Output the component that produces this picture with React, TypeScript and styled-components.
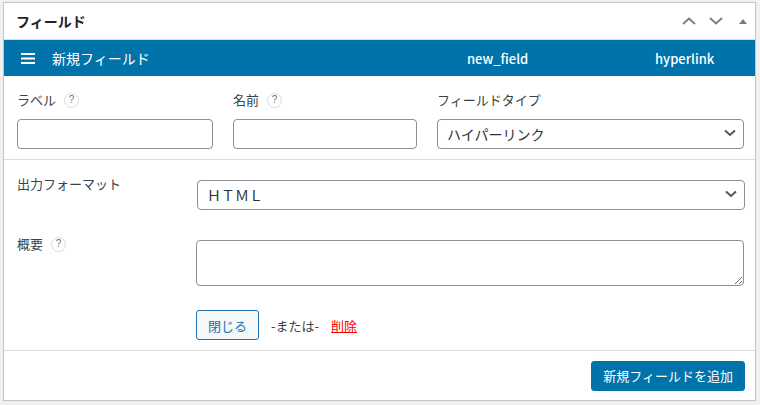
import React from 'react';
import styled, { createGlobalStyle } from 'styled-components';

const GlobalStyle = createGlobalStyle`
  html, body {
    margin: 0;
    padding: 0;
    background: #f0f0f1;
  }
  body {
    font-family: "Noto Sans CJK JP", "Noto Sans", sans-serif;
    color: #3c434a;
  }
  * {
    box-sizing: border-box;
  }
`;

const Page = styled.div`
  padding: 2px 4px 0 3px;
`;

const Box = styled.div`
  width: 753px;
  height: 399px;
  background: #fff;
  border: 1px solid #c3c4c7;
  box-shadow: 0 1px 1px rgba(0, 0, 0, 0.04);
  display: flex;
  flex-direction: column;
`;

const BoxHeader = styled.div`
  height: 37px;
  display: flex;
  align-items: center;
  justify-content: space-between;
  padding: 0 2px 0 12px;
  border-bottom: 1px solid #dcdcde;
`;

const BoxTitle = styled.h2`
  margin: 0;
  font-size: 14px;
  font-weight: 700;
  color: #1d2327;
  line-height: 20px;
`;

const HandleActions = styled.div`
  display: flex;
  align-items: center;
  gap: 7px;
`;

const HandleButton = styled.button`
  width: 20px;
  height: 24px;
  padding: 0;
  border: 0;
  background: none;
  display: flex;
  align-items: center;
  justify-content: center;
  color: #787c82;
`;

const FieldBar = styled.div`
  height: 36px;
  background: #0073aa;
  color: #fff;
  display: grid;
  grid-template-columns: 463px 188px 1fr;
  align-items: center;
  font-size: 13px;
`;

const FieldBarTitle = styled.div`
  display: flex;
  align-items: center;
  gap: 17px;
  padding-left: 17px;
  font-size: 14px;
`;

const FieldBarCell = styled.div`
  font-weight: 500;
`;

const TopSection = styled.div`
  display: grid;
  grid-template-columns: 196px 184px 307px;
  column-gap: 20px;
  padding: 14px 0 10px 13px;
  border-bottom: 1px solid #dcdcde;
`;

const Column = styled.div`
  display: flex;
  flex-direction: column;
  gap: 9px;
`;

const Label = styled.label`
  display: flex;
  align-items: center;
  gap: 8px;
  font-size: 13px;
  line-height: 20px;
  color: #3c434a;
`;

const HelpIcon = styled.span`
  width: 15px;
  height: 15px;
  border: 1px solid #dcdcde;
  border-radius: 50%;
  display: inline-flex;
  align-items: center;
  justify-content: center;
  font-family: "Liberation Sans", sans-serif;
  font-size: 10px;
  color: #72777c;
`;

const TextInput = styled.input`
  width: 100%;
  height: 30px;
  border: 1px solid #8c8f94;
  border-radius: 4px;
  background: #fff;
  padding: 0 8px;
  font: inherit;
`;

const SelectWrap = styled.div`
  position: relative;
  width: 100%;
`;

const Select = styled.select`
  width: 100%;
  height: 30px;
  appearance: none;
  border: 1px solid #8c8f94;
  border-radius: 4px;
  background: #fff;
  padding: 0 24px 0 9px;
  font-family: "Noto Sans CJK JP", sans-serif;
  font-size: 14px;
  color: #2c3338;
`;

const SelectArrow = styled.svg`
  position: absolute;
  right: 8px;
  top: 10px;
  pointer-events: none;
`;

const DetailSection = styled.div`
  flex: 1;
  display: grid;
  grid-template-columns: 180px 1fr;
  align-content: start;
  padding: 20px 10px 10px 13px;
  border-bottom: 1px solid #dcdcde;
`;

const DetailLabel = styled(Label)`
  align-self: start;
  margin-top: -6px;
`;

const FieldCell = styled.div<{ $gap?: number }>`
  margin-bottom: ${(p) => p.$gap ?? 0}px;
`;

const TextArea = styled.textarea`
  display: block;
  width: 100%;
  height: 46px;
  margin-left: -1px;
  border: 1px solid #8c8f94;
  border-radius: 4px;
  background: #fff;
  font: inherit;
  padding: 4px 8px;
`;

const Actions = styled.div`
  grid-column: 2;
  display: flex;
  align-items: center;
  gap: 12px;
  margin-left: -1px;
  font-size: 13px;
`;

const SecondaryButton = styled.button`
  height: 30px;
  padding: 0 11px;
  border: 1px solid #2271b1;
  border-radius: 3px;
  background: #f6f7f7;
  color: #2271b1;
  font-family: inherit;
  font-size: 13px;
`;

const OrText = styled.span`
  color: #3c434a;
`;

const DeleteLink = styled.a`
  color: #f00;
  text-decoration: underline;
`;

const Footer = styled.div`
  height: 49px;
  display: flex;
  align-items: center;
  justify-content: flex-end;
  padding: 0 10px 0 0;
`;

const PrimaryButton = styled.button`
  height: 30px;
  padding: 0 11px;
  border: 1px solid #0073aa;
  border-radius: 3px;
  background: #0073aa;
  color: #fff;
  font-family: inherit;
  font-size: 13px;
`;

const Chevron: React.FC<{ up?: boolean }> = ({ up }) => (
  <svg width="14" height="8" viewBox="0 0 14 8" fill="none">
    <path
      d={up ? 'M1 7 L7 1.5 L13 7' : 'M1 1 L7 6.5 L13 1'}
      stroke="currentColor"
      strokeWidth="1.8"
    />
  </svg>
);

const Triangle = () => (
  <svg width="8" height="5" viewBox="0 0 8 5">
    <path d="M0 5 L4 0 L8 5 Z" fill="currentColor" />
  </svg>
);

const Hamburger = () => (
  <svg width="14" height="11" viewBox="0 0 14 11">
    <rect x="0" y="0" width="14" height="2" fill="#fff" />
    <rect x="0" y="4.5" width="14" height="2" fill="#fff" />
    <rect x="0" y="9" width="14" height="2" fill="#fff" />
  </svg>
);

const DropArrow = () => (
  <SelectArrow width="12" height="8" viewBox="0 0 12 8" fill="none">
    <path d="M1 1.5 L6 6 L11 1.5" stroke="#50575e" strokeWidth="2" />
  </SelectArrow>
);

const App: React.FC = () => {
  return (
    <Page>
      <GlobalStyle />
      <Box>
        <BoxHeader>
          <BoxTitle>フィールド</BoxTitle>
          <HandleActions>
            <HandleButton>
              <Chevron up />
            </HandleButton>
            <HandleButton>
              <Chevron />
            </HandleButton>
            <HandleButton>
              <Triangle />
            </HandleButton>
          </HandleActions>
        </BoxHeader>

        <FieldBar>
          <FieldBarTitle>
            <Hamburger />
            新規フィールド
          </FieldBarTitle>
          <FieldBarCell>new_field</FieldBarCell>
          <FieldBarCell>hyperlink</FieldBarCell>
        </FieldBar>

        <TopSection>
          <Column>
            <Label>
              ラベル <HelpIcon>?</HelpIcon>
            </Label>
            <TextInput type="text" />
          </Column>
          <Column>
            <Label>
              名前 <HelpIcon>?</HelpIcon>
            </Label>
            <TextInput type="text" />
          </Column>
          <Column>
            <Label>フィールドタイプ</Label>
            <SelectWrap>
              <Select defaultValue="hyperlink">
                <option value="hyperlink">ハイパーリンク</option>
              </Select>
              <DropArrow />
            </SelectWrap>
          </Column>
        </TopSection>

        <DetailSection>
          <DetailLabel>出力フォーマット</DetailLabel>
          <FieldCell $gap={30}>
            <SelectWrap>
              <Select defaultValue="html">
                <option value="html">ＨＴＭＬ</option>
              </Select>
              <DropArrow />
            </SelectWrap>
          </FieldCell>

          <DetailLabel>
            概要 <HelpIcon>?</HelpIcon>
          </DetailLabel>
          <FieldCell $gap={24}>
            <TextArea />
          </FieldCell>

          <Actions>
            <SecondaryButton>閉じる</SecondaryButton>
            <OrText>-または-</OrText>
            <DeleteLink href="#">削除</DeleteLink>
          </Actions>
        </DetailSection>

        <Footer>
          <PrimaryButton>新規フィールドを追加</PrimaryButton>
        </Footer>
      </Box>
    </Page>
  );
};

export default App;
